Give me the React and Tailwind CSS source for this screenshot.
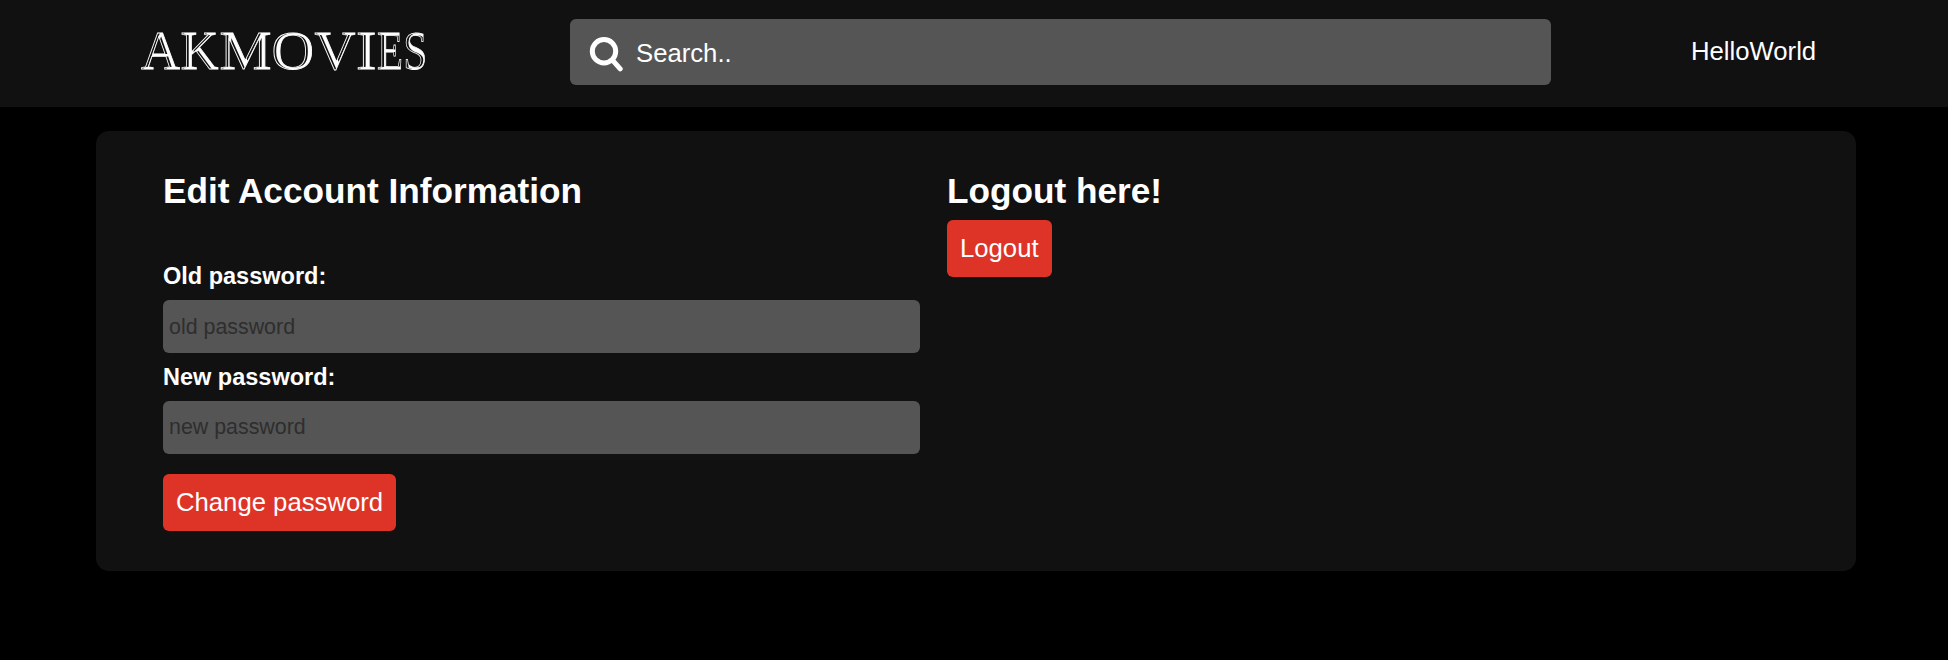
const face = "font-['Liberation_Sans',Arial,sans-serif]";

const letters = [
  ["A", 141, 39],
  ["K", 180.5, 38],
  ["M", 219.5, 52],
  ["O", 271.5, 42.5],
  ["V", 314.5, 41],
  ["I", 356, 20.5],
  ["E", 377, 26],
  ["S", 403.3, 24],
];

// Engraved capitals: an outlined letter whose right-hand part is filled in.
function Logo() {
  return (
    <svg width="300" height="80" viewBox="136 10 300 80" aria-label="AKMOVIES" className="block overflow-visible">
      <defs>
        <clipPath id="caps">
          {letters.map(([c, x, w]) => (
            <text key={c} x={x} y="68.5" textLength={w} lengthAdjust="spacingAndGlyphs" fontFamily="Liberation Serif, serif" fontSize="54.5">{c}</text>
          ))}
        </clipPath>
      </defs>
      <g fill="#111" stroke="#fff" strokeWidth="0.8" fontFamily="Liberation Serif, serif" fontSize="54.5">
        {letters.map(([c, x, w]) => (
          <text key={c} x={x} y="68.5" textLength={w} lengthAdjust="spacingAndGlyphs">{c}</text>
        ))}
      </g>
      <g clipPath="url(#caps)">
        <g transform="translate(2.2 0)">
          <rect x="130" y="20" width="310" height="60" fill="#fff" clipPath="url(#caps)" />
        </g>
      </g>
    </svg>
  );
}

function Field({ label, placeholder, shift }) {
  return (
    <label className="block">
      <span className="block h-[48px] pt-[10px] text-[23.5px] leading-[28px] font-bold">{label}</span>
      <input
        placeholder={placeholder}
        className={`block h-[53px] w-full rounded-[6px] bg-[#555] px-[6px] text-[21.4px] outline-none placeholder:text-[#2e2e2e] placeholder:opacity-100 ${shift}`}
      />
    </label>
  );
}

function Button({ children }) {
  return (
    <button className="block h-[57px] rounded-[6px] bg-[#de3428] px-[13px] text-[25.7px] leading-[57px]">{children}</button>
  );
}

export default function App() {
  return (
    <div className={`h-[660px] overflow-hidden bg-black text-white ${face}`}>
      <header className="flex h-[107px] items-start bg-[#111]">
        <div className="ml-[136px] mt-[10px] w-[434px]"><Logo /></div>
        <div className="mt-[19px] flex h-[66px] w-[981px] items-center rounded-[6px] bg-[#555] pl-[19px]">
          <svg width="36" height="40" viewBox="589 32 36 40" fill="none" stroke="#fff" strokeWidth="5" strokeLinecap="round">
            <circle cx="604" cy="51.2" r="11.7" />
            <path d="M612.5 60.2 620.2 68.8" />
          </svg>
          <span className="ml-[11px] pt-[2px] text-[25.7px]">Search..</span>
        </div>
        <span className="ml-[140px] mt-[36px] text-[25.7px] leading-[30px]">HelloWorld</span>
      </header>
      <main className="ml-[96px] mt-6 flex h-[440px] w-[1760px] rounded-[13px] bg-[#111] pl-[67px] pt-[39px]">
        <section className="w-[757px]">
          <h1 className="h-[82px] text-[35.2px] leading-[42px] font-bold">Edit Account Information</h1>
          <Field label="Old password:" placeholder="old password" shift="pt-[2px]" />
          <Field label="New password:" placeholder="new password" shift="" />
          <div className="pt-5"><Button>Change password</Button></div>
        </section>
        <section className="ml-[27px]">
          <h2 className="h-[50px] text-[35.2px] leading-[42px] font-bold">Logout here!</h2>
          <Button>Logout</Button>
        </section>
      </main>
    </div>
  );
}
